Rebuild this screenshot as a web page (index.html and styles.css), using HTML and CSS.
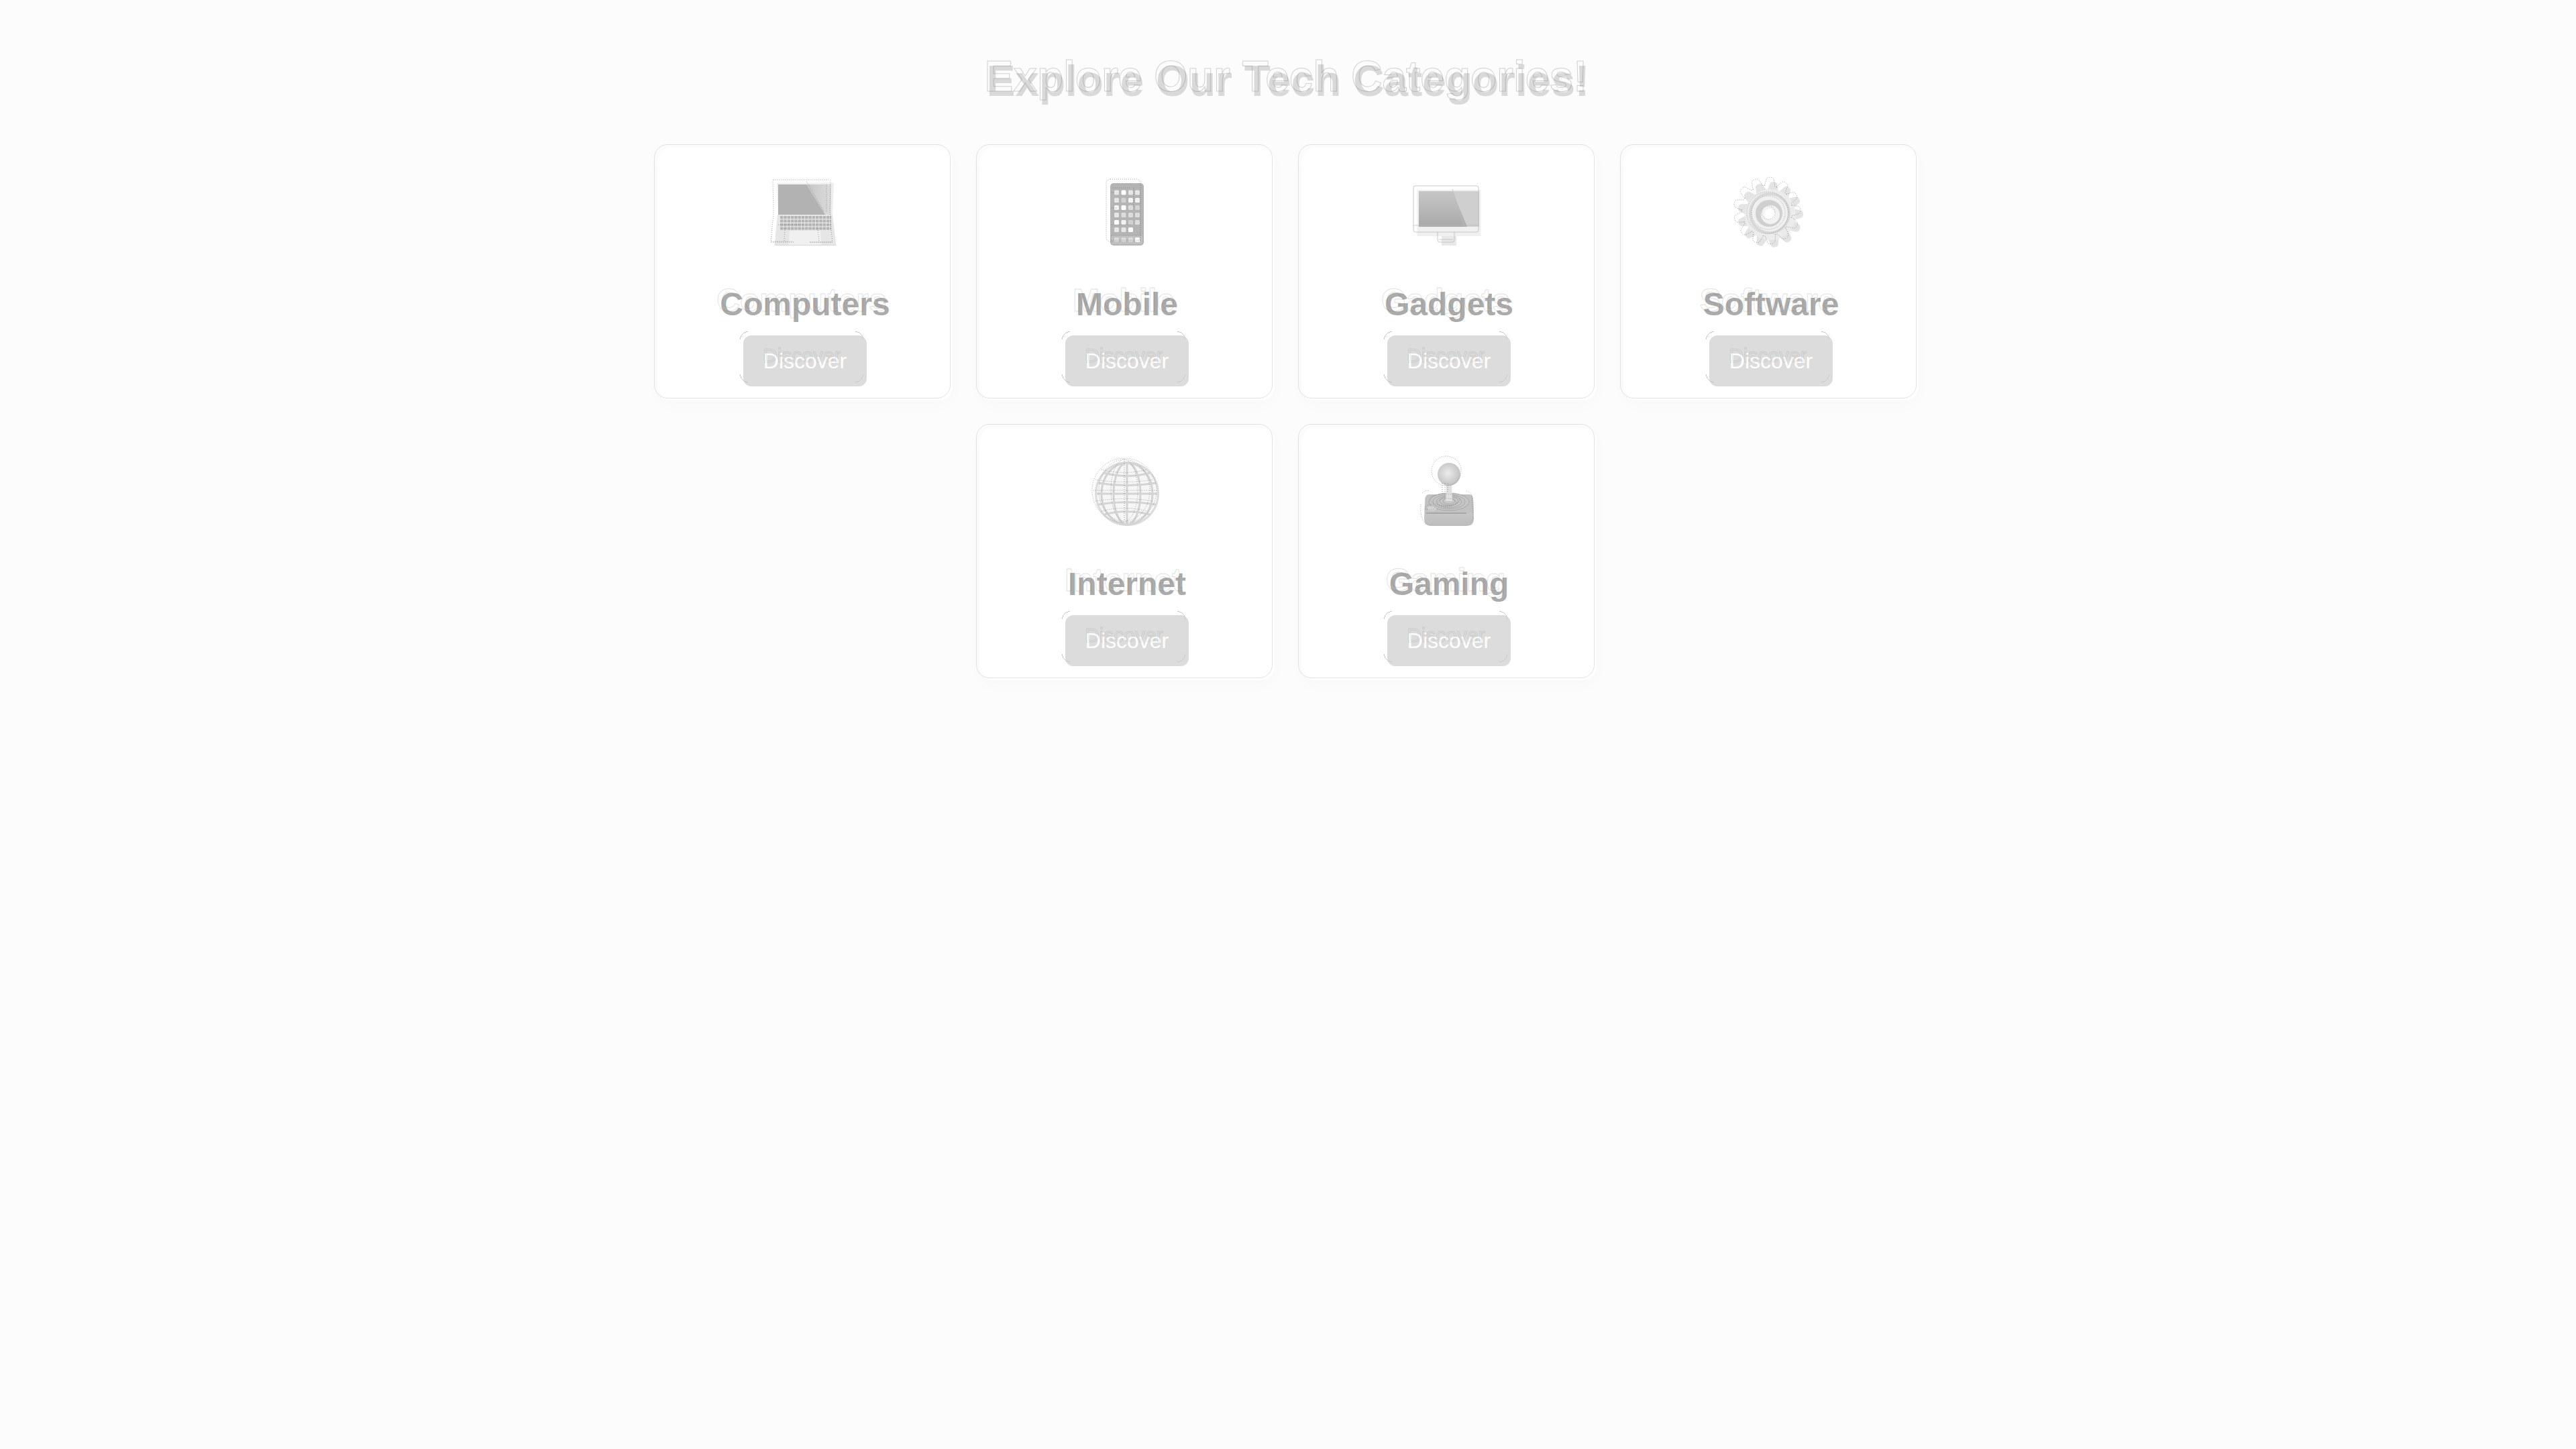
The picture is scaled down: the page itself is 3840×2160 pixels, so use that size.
FILE: index.html
```html
<!DOCTYPE html>
<html lang="en">
<head>
<meta charset="utf-8">
<title>Explore Our Tech Categories!</title>
<link rel="stylesheet" href="styles.css">
</head>
<body>
<main class="page">
  <h1 class="headline" data-ghost="Explore Our Tech Categories!">Explore Our Tech Categories!</h1>
  <section class="grid">

    <article class="card">
      <svg class="icon" viewBox="0 0 100 100" aria-hidden="true">
        <defs>
          <pattern id="keys" x="13" y="52" width="5.3" height="5.5" patternUnits="userSpaceOnUse"><rect width="4.4" height="4.2" rx=".6" fill="#b4b4b4"/></pattern>
          <linearGradient id="glare" x1="0" y1="0" x2="1" y2="0"><stop offset="0" stop-color="#c4c4c4"/><stop offset="1" stop-color="#dcdcdc"/></linearGradient>
          <linearGradient id="imac" x1="0" y1="0" x2="0" y2="1"><stop offset="0" stop-color="#c6c6c6"/><stop offset="1" stop-color="#a9a9a9"/></linearGradient>
        </defs>
        <path d="M8 4q0-1.500 1.500-1.500h82q1.500 0 1.500 1.500l-2 47h-81z" fill="#eeeeee"/>
        <rect x="10" y="5" width="79" height="45" fill="#b2b2b2"/>
        <path d="M52 5h37v45h-9z" fill="url(#glare)"/>
        <path d="M9 50h82l5.500 45.500h-92z" fill="#e6e6e6"/>
        <rect x="13" y="52" width="76" height="22" fill="url(#keys)"/>
        <path d="M27 74h46l1.500 21h-49z" fill="#f0f0f0"/>
        <path d="M5 95.500h91" stroke="#d6d6d6" stroke-width="1" fill="none"/>
        <g class="ghost-line">
          <path d="M3 -2h83q2 0 2 2l-1 45 3.500 43q0 3-3 3h-31M33 91h-34l4-43-1-48q0-2 1-2"/>
          <path d="M52 0l26 45M82 5v40M20 70l-1 20M69 70l2 20M10 65h38M57 91h34M0 90h33"/>
        </g>
      </svg>
      <h2 class="title" data-ghost="Computers">Computers</h2>
      <button class="action" data-ghost="Discover">Discover</button>
    </article>

    <article class="card">
      <svg class="icon" viewBox="0 0 100 100" aria-hidden="true">
        <rect x="25" y="3" width="50" height="93" rx="5" fill="#b4b4b4"/>
        <rect x="27" y="81" width="46" height="13" rx="3" fill="#c0c0c0"/>
        <g fill="#e6e6e6">
          <rect x="31" y="13.500" width="7" height="7" rx="1.500"/><rect x="41.500" y="13.500" width="7" height="7" rx="1.500" fill="#fff"/><rect x="52" y="13.500" width="7" height="7" rx="1.500"/><rect x="62" y="13.500" width="7" height="7" rx="1.500"/>
          <rect x="31" y="25" width="7" height="7" rx="1.500"/><rect x="41.500" y="25" width="7" height="7" rx="1.500" fill="#d2d2d2"/><rect x="52" y="25" width="7" height="7" rx="1.500" fill="#f4f4f4"/><rect x="62" y="25" width="7" height="7" rx="1.500" fill="#f2f2f2"/>
          <rect x="31" y="36" width="7" height="7" rx="1.500" fill="#f4f4f4"/><rect x="41.500" y="36" width="7" height="7" rx="1.500" fill="#fff"/><rect x="52" y="36" width="7" height="7" rx="1.500" fill="#dcdcdc"/><rect x="62" y="36" width="7" height="7" rx="1.500" fill="#d4d4d4"/>
          <rect x="31" y="47" width="7" height="7" rx="1.500"/><rect x="41.500" y="47" width="7" height="7" rx="1.500" fill="#dcdcdc"/><rect x="52" y="47" width="7" height="7" rx="1.500" fill="#dcdcdc"/><rect x="62" y="47" width="7" height="7" rx="1.500" fill="#dcdcdc"/>
          <rect x="31" y="58" width="7" height="7" rx="1.500" fill="#fff"/><rect x="41.500" y="58" width="7" height="7" rx="1.500" fill="#f2f2f2"/><rect x="52" y="58" width="7" height="7" rx="1.500" fill="#d0d0d0"/><rect x="62" y="58" width="7" height="7" rx="1.500" fill="#dcdcdc"/>
          <rect x="31" y="69" width="7" height="7" rx="1.500"/><rect x="41.500" y="69" width="7" height="7" rx="1.500"/><rect x="52" y="69" width="7" height="7" rx="1.500" fill="#fff"/>
          <rect x="31" y="84" width="7" height="7" rx="1.500" fill="#dcdcdc"/><rect x="41.500" y="84" width="7" height="7" rx="1.500" fill="#dcdcdc"/><rect x="52" y="84" width="7" height="7" rx="1.500" fill="#dcdcdc"/><rect x="62" y="84" width="7" height="7" rx="1.500" fill="#fff"/>
        </g>
        <g class="ghost-line">
          <rect x="19" y="-3" width="51" height="93" rx="6"/>
          <path d="M29 10h26M27 17h6M60 10v30M27 40h8M27 65h30M27 81h44M27 88h44"/>
        </g>
      </svg>
      <h2 class="title" data-ghost="Mobile">Mobile</h2>
      <button class="action" data-ghost="Discover">Discover</button>
    </article>

    <article class="card">
      <svg class="icon" viewBox="0 0 100 100" aria-hidden="true">
        <rect x="2.500" y="13" width="95" height="69" fill="#f0f0f0"/>
        <rect x="5" y="15" width="90" height="53" fill="url(#imac)"/>
        <path d="M55 15h40v53h-18z" fill="#cfcfcf"/>
        <rect x="39" y="82" width="22" height="14" fill="#e8e8e8"/>
        <g class="ghost-thin">
          <rect x="-3" y="7" width="97" height="69" rx="3"/>
          <path d="M-3 66h97M33 76v12q0 3 3 3h19q3 0 3-3v-12M35 87h21M55 12l18 56"/>
        </g>
      </svg>
      <h2 class="title" data-ghost="Gadgets">Gadgets</h2>
      <button class="action" data-ghost="Discover">Discover</button>
    </article>

    <article class="card">
      <svg class="icon" viewBox="0 0 100 100" aria-hidden="true">
        <defs>
          <path id="tooth" d="M-8-36l2.500-10q1-3 5.500-3t5.500 3l2.500 10z"/>
          <path id="tooth-ghost" d="M-8-37l2.500-10q1-3 5.500-3t5.500 3l2.500 10q3 1 5 1"/>
        </defs>
        <g transform="translate(49 50)" fill="#e4e4e4">
          <use href="#tooth" transform="rotate(6)"/><use href="#tooth" transform="rotate(33.700)"/><use href="#tooth" transform="rotate(61.400)"/><use href="#tooth" transform="rotate(89.100)"/><use href="#tooth" transform="rotate(116.800)"/><use href="#tooth" transform="rotate(144.500)"/><use href="#tooth" transform="rotate(172.200)"/><use href="#tooth" transform="rotate(199.900)"/><use href="#tooth" transform="rotate(227.600)"/><use href="#tooth" transform="rotate(255.300)"/><use href="#tooth" transform="rotate(283)"/><use href="#tooth" transform="rotate(310.700)"/><use href="#tooth" transform="rotate(338.400)"/>
        </g>
        <circle cx="49" cy="50" r="38" fill="#ececec"/>
        <circle cx="48" cy="48" r="31" fill="#d8d8d8"/>
        <circle cx="48" cy="48" r="27" fill="#f0f0f0"/>
        <circle cx="47" cy="48" r="20" fill="#cfcfcf"/>
        <circle cx="49" cy="50" r="14" fill="#f2f2f2"/>
        <circle cx="48" cy="49" r="8" fill="#fff"/>
        <g class="ghost-line">
          <g transform="translate(44 44)">
            <use href="#tooth-ghost" transform="rotate(6)"/><use href="#tooth-ghost" transform="rotate(33.700)"/><use href="#tooth-ghost" transform="rotate(61.400)"/><use href="#tooth-ghost" transform="rotate(89.100)"/><use href="#tooth-ghost" transform="rotate(116.800)"/><use href="#tooth-ghost" transform="rotate(144.500)"/><use href="#tooth-ghost" transform="rotate(172.200)"/><use href="#tooth-ghost" transform="rotate(199.900)"/><use href="#tooth-ghost" transform="rotate(227.600)"/><use href="#tooth-ghost" transform="rotate(255.300)"/><use href="#tooth-ghost" transform="rotate(283)"/><use href="#tooth-ghost" transform="rotate(310.700)"/><use href="#tooth-ghost" transform="rotate(338.400)"/>
          </g>
          <circle cx="45" cy="47" r="31"/>
          <circle cx="46" cy="47" r="25"/>
          <circle cx="46" cy="47" r="10"/>
        </g>
      </svg>
      <h2 class="title" data-ghost="Software">Software</h2>
      <button class="action" data-ghost="Discover">Discover</button>
    </article>

    <article class="card">
      <svg class="icon" viewBox="0 0 100 100" aria-hidden="true">
        <circle cx="50" cy="49" r="46.500" fill="#f6f6f6" stroke="#dcdcdc" stroke-width="3"/>
        <g class="globe-grid">
          <ellipse cx="50" cy="49" rx="20" ry="46"/>
          <ellipse cx="50" cy="49" rx="38" ry="46"/>
          <path d="M50 3v92M5 49h90M16 18q34 9 68 0M7 33q43 7 86 0M7 65q43-7 86 0M16 80q34-9 68 0"/>
        </g>
        <g class="ghost-line">
          <circle cx="46" cy="44" r="48"/>
          <ellipse cx="46" cy="44" rx="20" ry="46"/>
          <ellipse cx="46" cy="44" rx="38" ry="46"/>
          <path d="M46 -3v93M0 44h92M12 13q34 9 68 0M3 28q43 7 86 0M3 60q43-7 86 0M12 75q34-9 68 0"/>
        </g>
      </svg>
      <h2 class="title" data-ghost="Internet">Internet</h2>
      <button class="action" data-ghost="Discover">Discover</button>
    </article>

    <article class="card">
      <svg class="icon" viewBox="0 0 100 100" aria-hidden="true">
        <defs>
          <radialGradient id="ball" cx=".45" cy=".45" r=".6"><stop offset="0" stop-color="#ececec"/><stop offset="1" stop-color="#bebebe"/></radialGradient>
          <linearGradient id="padfront" x1="0" y1="0" x2="0" y2="1"><stop offset="0" stop-color="#d8d8d8"/><stop offset="1" stop-color="#bcbcbc"/></linearGradient>
        </defs>
        <path d="M20 50h60q5 0 6 6l1 30q0 11-11 11h-53q-10 0-10-11l1-30q1-6 6-6z" fill="url(#padfront)"/>
        <path d="M20 50h60q5 0 6 6l1 22h-73l1-22q1-6 6-6z" fill="#c2c2c2"/>
        <g class="joy-rings">
          <ellipse cx="50" cy="61" rx="30" ry="13"/>
          <ellipse cx="50" cy="61" rx="24" ry="10.500"/>
          <ellipse cx="50" cy="61" rx="19" ry="8.500"/>
          <ellipse cx="50" cy="60" rx="14" ry="6.500"/>
          <ellipse cx="50" cy="60" rx="9" ry="4.500"/>
        </g>
        <path d="M46 35h8l1 25h-10z" fill="#e0e0e0"/>
        <circle cx="50" cy="20" r="17" fill="url(#ball)"/>
        <ellipse cx="24" cy="71" rx="7" ry="3.500" fill="#d4d4d4"/>
        <path class="joy-line" d="M16 78h60"/>
        <g class="ghost-line">
          <circle cx="46" cy="15" r="22"/>
          <path d="M40 33v14M44 33v14M48 33v14M8 65q-2 20 8 30M10 48q5-5 10-3M76 45q5 1 8 6l2 35-5 7M14 72h4"/>
          <ellipse cx="44" cy="58" rx="22" ry="9"/>
          <ellipse cx="47" cy="62" rx="14" ry="6"/>
          <ellipse cx="22" cy="69" rx="7" ry="4"/>
        </g>
      </svg>
      <h2 class="title" data-ghost="Gaming">Gaming</h2>
      <button class="action" data-ghost="Discover">Discover</button>
    </article>

  </section>
</main>
</body>
</html>
```

FILE: styles.css
```css
* {
  box-sizing: border-box;
}

html,
body {
  margin: 0;
  min-height: 100%;
  background: #fcfcfc;
}

body {
  font-family: "Liberation Sans", Arial, sans-serif;
}

.page {
  display: flex;
  flex-direction: column;
  align-items: center;
  padding-top: 84px;
  min-height: 2160px;
}

.headline,
.title,
.action {
  position: relative;
}

.headline::before,
.title::before,
.action::before {
  content: attr(data-ghost);
  position: absolute;
  white-space: nowrap;
  color: transparent;
  pointer-events: none;
}

.headline {
  margin: 0 0 62px;
  font-size: 64px;
  line-height: 74px;
  font-weight: 700;
  color: #d9d9d9;
}

.headline::before {
  left: -3px;
  top: -7px;
  -webkit-text-stroke: 1px rgba(110, 110, 110, 0.3);
}

.grid {
  display: flex;
  flex-wrap: wrap;
  justify-content: center;
  gap: 40px;
  width: 1880px;
}

.card {
  position: relative;
  display: flex;
  flex-direction: column;
  align-items: center;
  width: 440px;
  height: 377px;
  padding-top: 50px;
  background: #fff;
  border-radius: 20px;
  box-shadow: 0 8px 24px rgba(0, 0, 0, 0.02);
}

.card::before {
  content: "";
  position: absolute;
  left: -5px;
  top: -5px;
  width: 100%;
  height: 100%;
  border: 1px solid #e2e2e2;
  border-radius: 20px;
  pointer-events: none;
}

.icon {
  display: block;
  width: 100px;
  height: 100px;
  overflow: visible;
  flex: none;
}

.ghost-line,
.ghost-thin {
  fill: none;
  stroke: #666;
  stroke-width: 0.8;
}

.ghost-line {
  stroke-dasharray: 1 2;
  opacity: 0.75;
}

.ghost-thin {
  stroke: #bbb;
}

.globe-grid {
  fill: none;
  stroke: #d4d4d4;
  stroke-width: 3;
}

.joy-rings {
  fill: #c6c6c6;
  stroke: #a8a8a8;
  stroke-width: 1;
}

.joy-line {
  fill: none;
  stroke: #8a8a8a;
  stroke-width: 1;
}

.title {
  margin: 56px 0 0;
  font-size: 48px;
  line-height: 55px;
  font-weight: 700;
  color: #ababab;
}

.title::before {
  left: -5px;
  top: -6px;
  -webkit-text-stroke: 1px rgba(110, 110, 110, 0.22);
}

.action {
  display: block;
  width: 184px;
  height: 76px;
  margin-top: 19px;
  padding: 0;
  border: 0;
  border-radius: 12px;
  background: #dcdcdc;
  color: #fff;
  font-family: "Liberation Sans", Arial, sans-serif;
  font-size: 32px;
  font-weight: 500;
  text-align: center;
}

.action::before {
  left: 29px;
  top: 13px;
  font-size: 30px;
  -webkit-text-stroke: 1px rgba(90, 90, 90, 0.15);
}

.action::after {
  content: "";
  position: absolute;
  left: -5px;
  top: -6px;
  width: 100%;
  height: 100%;
  background:
    radial-gradient(circle at 12px 12px, transparent 11px, #c8c8c8 11px, #c8c8c8 12px, transparent 12px) left top / 12px 12px no-repeat,
    radial-gradient(circle at 0 12px, transparent 11px, #c8c8c8 11px, #c8c8c8 12px, transparent 12px) right top / 12px 12px no-repeat,
    radial-gradient(circle at 12px 0, transparent 11px, #c8c8c8 11px, #c8c8c8 12px, transparent 12px) left bottom / 12px 12px no-repeat,
    radial-gradient(circle at 0 0, transparent 11px, #c8c8c8 11px, #c8c8c8 12px, transparent 12px) right bottom / 12px 12px no-repeat;
  pointer-events: none;
}
```
